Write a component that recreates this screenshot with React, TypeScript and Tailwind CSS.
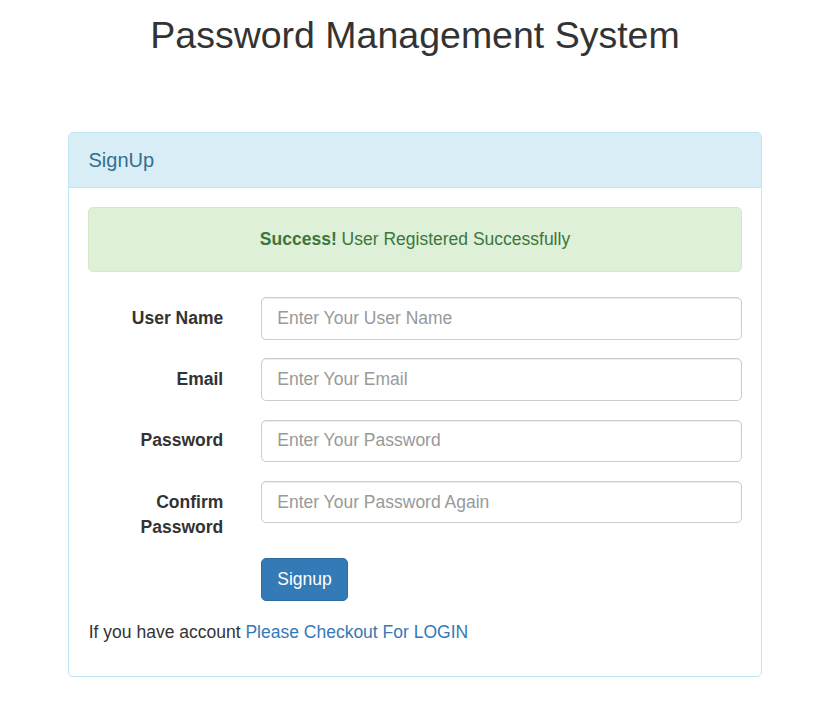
const fields = [
  { label: 'User Name', placeholder: 'Enter Your User Name', type: 'text' },
  { label: 'Email', placeholder: 'Enter Your Email', type: 'email' },
  { label: 'Password', placeholder: 'Enter Your Password', type: 'password' },
  { label: 'Confirm Password', placeholder: 'Enter Your Password Again', type: 'password' },
]

export default function App() {
  return (
    <div className="min-h-screen bg-white font-['Liberation_Sans',Arial,sans-serif] text-[17.5px] leading-[25px] text-[#333]">
      <div className="ml-[68px] w-[694px]">
        <h2 className="pt-[15px] text-center text-[37.5px] leading-[41.25px] font-normal">
          Password Management System
        </h2>

        <div className="mt-[76px] rounded-[5px] border border-[#bce8f1]">
          <div className="rounded-t-[4px] border-b border-[#bce8f1] bg-[#d9edf7] px-[19.5px] py-[12.5px] text-[#31708f]">
            <h3 className="text-[20px] leading-[28.6px]">SignUp</h3>
          </div>

          <div className="p-[18.75px]">
            <div className="mb-[25px] rounded-[5px] border border-[#d6e9c6] bg-[#dff0d8] px-[18.75px] py-[19.25px] text-center text-[#3c763d]">
              <strong>Success!</strong> User Registered Successfully
            </div>

            <form onSubmit={(e) => e.preventDefault()}>
              {fields.map((f) => (
                <div key={f.label} className="mb-[18.75px] flex gap-[37.5px]">
                  <label className="w-[135.5px] shrink-0 pt-[8.75px] text-right font-bold">{f.label}</label>
                  <input
                    type={f.type}
                    placeholder={f.placeholder}
                    className="h-[42.5px] flex-1 rounded-[5px] border border-[#ccc] px-[15.5px] py-[7.5px] text-[#555] shadow-[inset_0_1px_1px_rgba(0,0,0,0.075)] outline-none placeholder:text-[#999]"
                  />
                </div>
              ))}

              <div className="mb-[18.75px] pl-[173px]">
                <button
                  type="submit"
                  className="h-[42.5px] rounded-[5px] border border-[#2e6da4] bg-[#337ab7] px-[15.5px] text-white"
                >
                  Signup
                </button>
              </div>
            </form>

            <p className="mb-[12.5px] pl-px">
              If you have account{' '}
              <a href="#" className="text-[#337ab7]">
                Please Checkout For LOGIN
              </a>
            </p>
          </div>
        </div>
      </div>
    </div>
  )
}
